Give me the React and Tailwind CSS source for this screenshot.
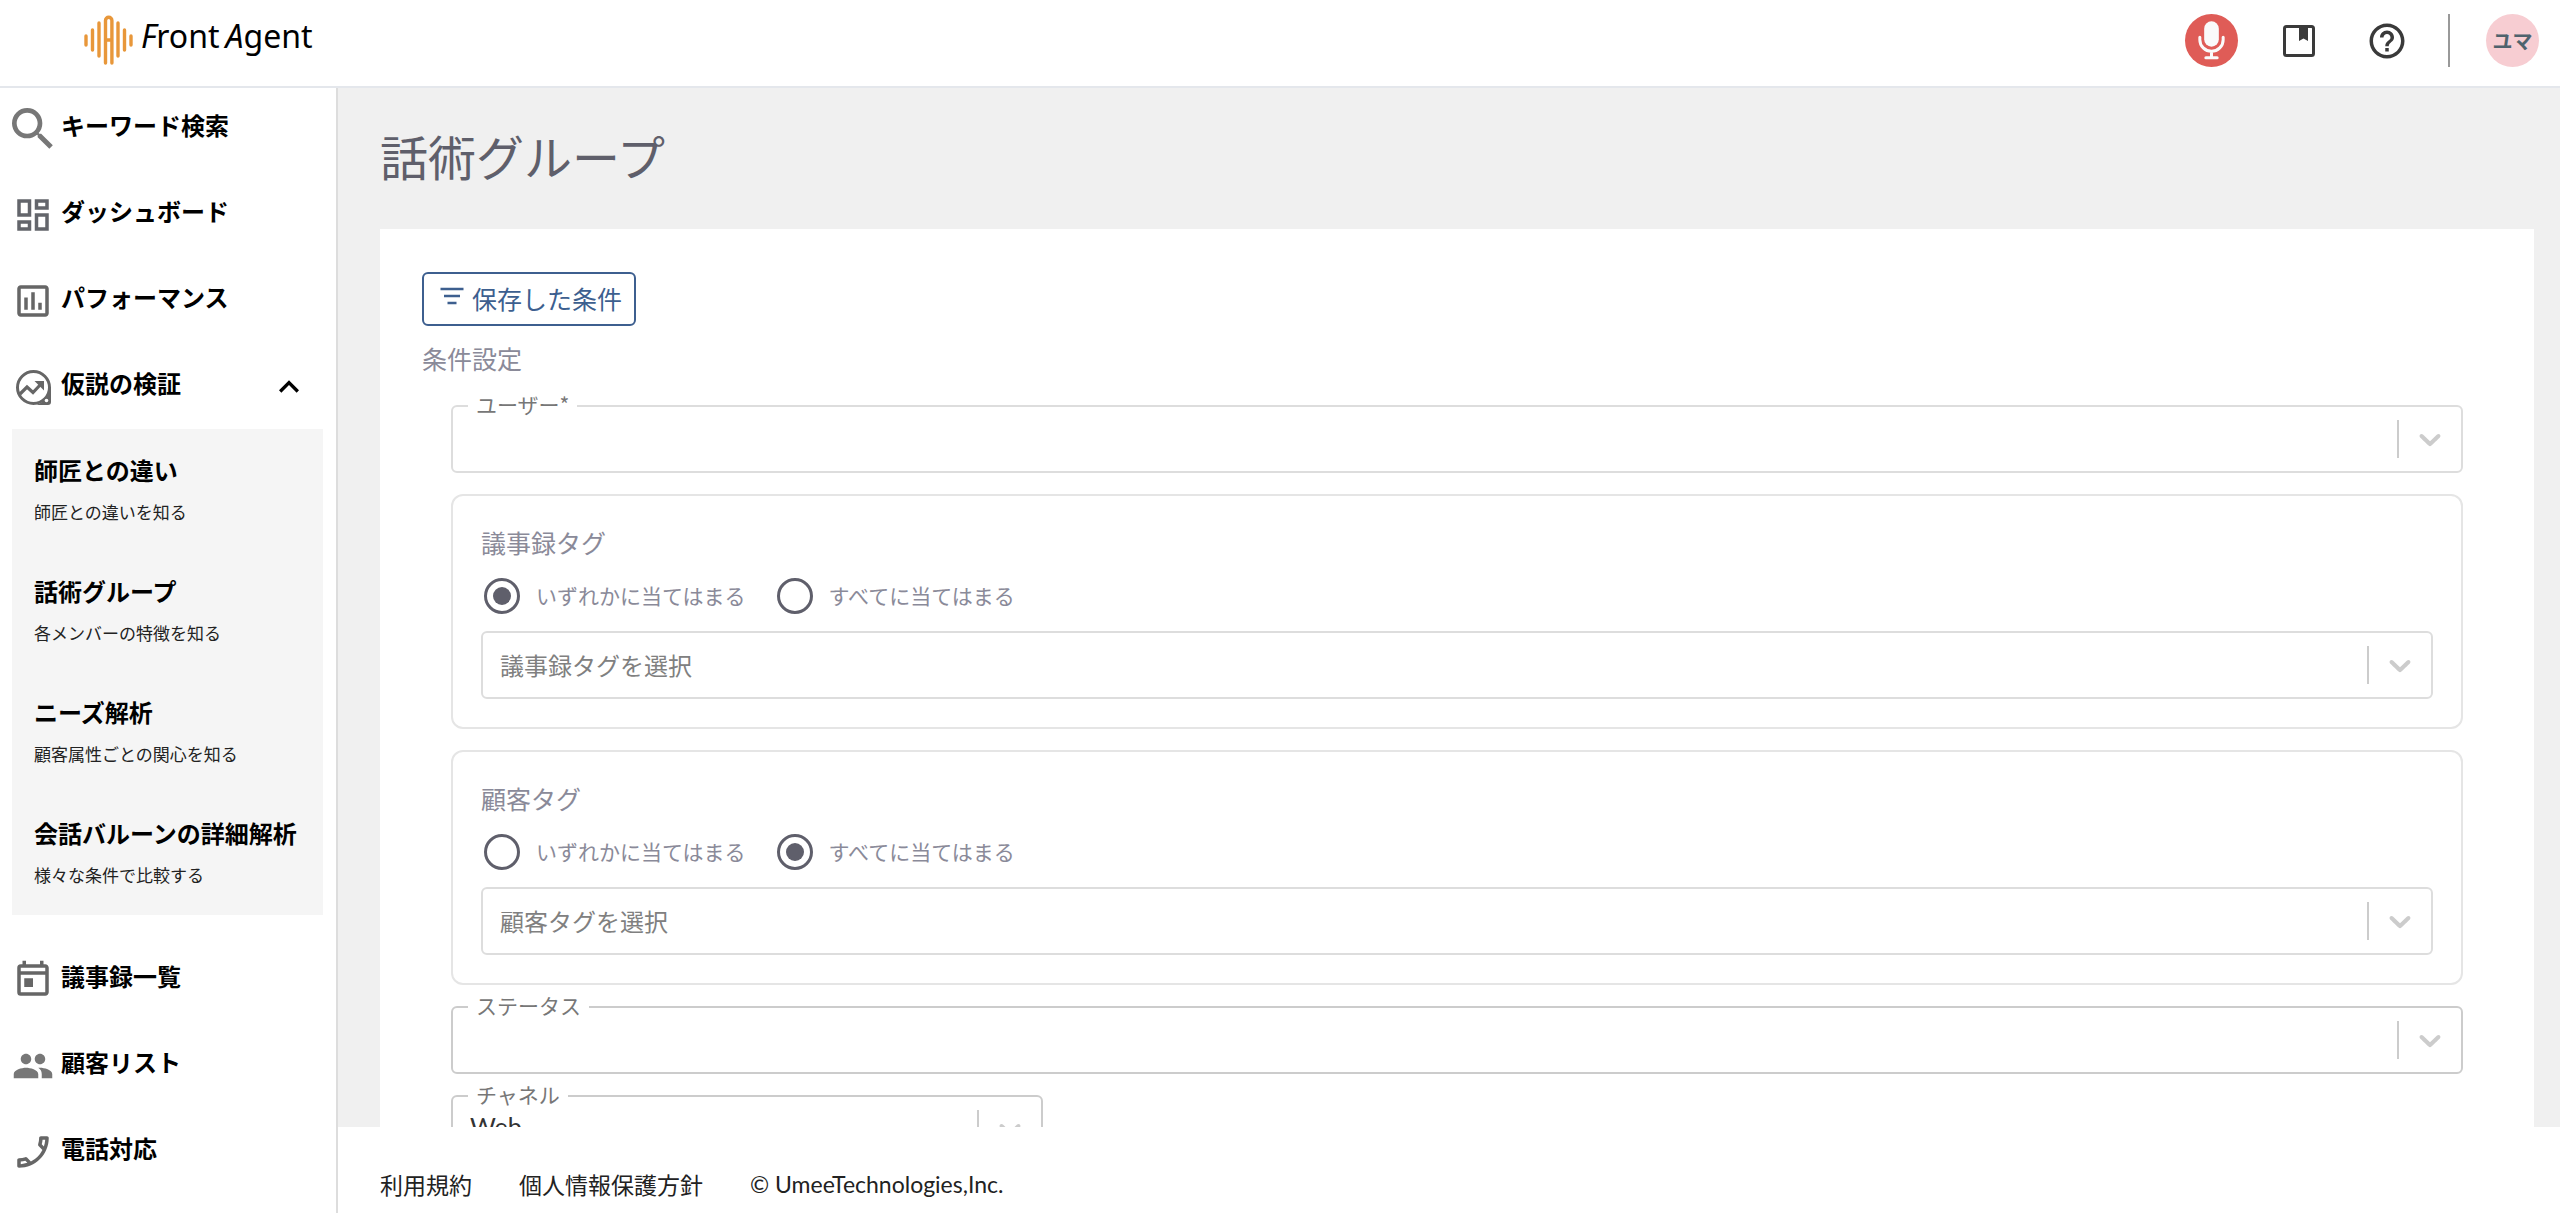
import React, { useState } from "react";
import {
    MdExpandLess,
    MdHelpOutline,
    MdOutlineAssessment,
    MdOutlineDashboard,
    MdOutlinePhone,
    MdOutlineToday,
    MdPeople,
    MdSearch,
} from "react-icons/md";

const LogoMark = () => (
    <svg viewBox="0 0 50 52" className="h-[52px] w-[50px]" fill="none" stroke="#e8973a" strokeWidth="3.4" strokeLinecap="round" aria-hidden="true">
        <path d="M3 22v9M9.500 16v20M16 9v33M35 9v33M41.500 16v20M48 22v9" />
        <path d="M22.500 49V6.500a3.200 3.200 0 0 1 6.400 0V49M22.500 26h6.400" />
    </svg>
);

const MicIcon = () => (
    <svg viewBox="0 0 80 117" className="h-[39px] w-[27px]" fill="none" stroke="#fafafa" strokeWidth="9" strokeLinecap="round" aria-hidden="true">
        <rect x="18" y="1" width="44" height="76" rx="22" fill="#fafafa" stroke="none" />
        <path d="M5 49v7a35 35 0 0 0 70 0v-7M40 92v17M23 110h34" />
    </svg>
);

const VerifyIcon = () => (
    <svg viewBox="0 0 35 35" className="h-[35px] w-[35px]" aria-hidden="true">
        <circle cx="17.500" cy="17.500" r="16" fill="none" stroke="#666" strokeWidth="3" />
        <path d="M35 17v15a3 3 0 0 1-3 3H18c8 0 15-8 15-18z" fill="#666" />
        <circle cx="30.500" cy="30.500" r="1.800" fill="#fff" />
        <path d="M4 24l7-7 6 5.500 8-8.500" fill="none" stroke="#666" strokeWidth="3.2" />
        <path d="M18.500 11H28v9.500z" fill="#666" />
    </svg>
);

const BookIcon = () => (
    <svg viewBox="0 0 32 32" className="h-8 w-8" aria-hidden="true">
        <rect x="1.500" y="1.500" width="29" height="29" rx="2" fill="none" stroke="#3a3a3a" strokeWidth="3" />
        <path d="M16 2h9v14l-4.500-2.500L16 16z" fill="#3a3a3a" />
    </svg>
);

const FilterIcon = () => (
    <svg viewBox="0 0 24 22" className="h-[22px] w-6" stroke="currentColor" strokeWidth="2.400" aria-hidden="true">
        <path d="M.5 2h23M4 9h16M7.500 16h9" />
    </svg>
);

const Chevron = () => (
    <svg viewBox="0 0 20 20" className="h-9 w-9" fill="#ccc" aria-hidden="true">
        <path d="M4.516 7.548c0.436-0.446 1.043-0.481 1.576 0l3.908 3.747 3.908-3.747c0.533-0.481 1.141-0.446 1.574 0 0.436 0.445 0.408 1.197 0 1.615-0.406 0.418-4.695 4.502-4.695 4.502-0.217 0.223-0.502 0.335-0.787 0.335s-0.570-0.112-0.789-0.335c0 0-4.287-4.084-4.695-4.502s-0.436-1.170 0-1.615z" />
    </svg>
);

const topMenu = [
    { label: "キーワード検索", icon: <MdSearch className="size-14 text-[#777]" /> },
    { label: "ダッシュボード", icon: <MdOutlineDashboard className="size-[42px] text-[#63656b]" /> },
    { label: "パフォーマンス", icon: <MdOutlineAssessment className="size-[42px] text-[#666]" /> },
];

const subMenu = [
    { label: "師匠との違い", note: "師匠との違いを知る" },
    { label: "話術グループ", note: "各メンバーの特徴を知る" },
    { label: "ニーズ解析", note: "顧客属性ごとの関心を知る" },
    { label: "会話バルーンの詳細解析", note: "様々な条件で比較する" },
];

const bottomMenu = [
    { label: "議事録一覧", icon: <MdOutlineToday className="size-[42px] text-[#666]" /> },
    { label: "顧客リスト", icon: <MdPeople className="size-[42px] text-[#777]" /> },
    { label: "電話対応", icon: <MdOutlinePhone className="size-[42px] -scale-x-100 text-[#666]" /> },
];

const MenuLink = ({ item }) => (
    <a href="#" className="flex h-[82px] items-center pl-[5px]">
        <span className="flex w-14 justify-center">{item.icon}</span>
        <span className="pb-2 text-[24px] leading-9 font-bold">{item.label}</span>
    </a>
);

const SelectBox = ({ id, label, placeholder, options = [], value = "", border = "border-[#ddd]" }) => (
    <div className={`relative flex h-[68px] items-center rounded-md border-2 bg-white ${border}`}>
        {label && (
            <label htmlFor={id} className="absolute -top-[17px] left-[15px] bg-white px-2 text-[21px] leading-7 text-[#777]">
                {label}
            </label>
        )}
        <select
            id={id}
            aria-label={label ? undefined : placeholder}
            defaultValue={value}
            className={`h-full flex-1 appearance-none bg-transparent pl-[17px] outline-none ${value ? "pb-1 font-['Lato','Noto_Sans_CJK_JP',sans-serif] text-[25px] text-[#333]" : "text-[24px] text-[#808080]"}`}
        >
            <option value="">{placeholder}</option>
            {options.map((option) => (
                <option key={option}>{option}</option>
            ))}
        </select>
        <span className="pointer-events-none flex items-center gap-[13px] pr-[13px]">
            <span className="h-[38px] w-0.5 bg-[#ccc]" />
            <Chevron />
        </span>
    </div>
);

const TagGroup = ({ name, title, placeholder, initial }) => {
    const [mode, setMode] = useState(initial);
    const modes = [
        { key: "any", label: "いずれかに当てはまる" },
        { key: "all", label: "すべてに当てはまる" },
    ];
    return (
        <section className="rounded-xl border-2 border-[#e5e5e5] p-7">
            <h3 className="text-[25px] leading-9 text-[#8a8a99]">{title}</h3>
            <div className="mt-[18px] mb-[17px] flex gap-[31px] pl-[3px]">
                {modes.map(({ key, label }) => (
                    <label key={key} className="flex h-9 items-center gap-4 text-[21px] leading-8 text-[#8a8a99]">
                        <input
                            type="radio"
                            name={name}
                            checked={mode === key}
                            onChange={() => setMode(key)}
                            className="grid size-9 appearance-none place-content-center rounded-full border-3 border-[#5f5f6b] before:size-[18px] before:rounded-full checked:before:bg-[#5f5f6b]"
                        />
                        <span className="pb-0.5">{label}</span>
                    </label>
                ))}
            </div>
            <SelectBox id={`${name}-select`} placeholder={placeholder} />
        </section>
    );
};

const Header = () => (
    <header className="flex h-[88px] shrink-0 items-start justify-between border-b-2 border-[#e4e7ec] bg-white pr-[21px] pl-[83px]">
        <a href="#" className="flex items-center gap-2 pt-[14px]">
            <LogoMark />
            <span className="flex gap-1.5 pb-2 font-['Noto_Sans',sans-serif] text-[32px] leading-10">
                <span><i>F</i>ront</span>
                <span><i>A</i>gent</span>
            </span>
        </a>
        <div className="flex items-center pt-[14px]">
            <button aria-label="録音" className="flex size-[53px] items-center justify-center rounded-full bg-[#df5c57]">
                <MicIcon />
            </button>
            <button aria-label="ガイド" className="ml-[45px]"><BookIcon /></button>
            <button aria-label="ヘルプ" className="ml-[51px]">
                <MdHelpOutline className="size-[42px] text-[#3a3a3a]" />
            </button>
            <span className="ml-10 h-[53px] w-0.5 bg-[#999]" />
            <button className="ml-9 size-[53px] rounded-full bg-[#f7cdd2] text-[20px] font-bold text-[#4f626d]">ユマ</button>
        </div>
    </header>
);

const Sidebar = () => {
    const [open, setOpen] = useState(true);
    return (
        <nav className="flex w-[338px] shrink-0 flex-col overflow-hidden border-r-2 border-[#ddd] bg-white text-black">
            <div className="flex flex-col gap-1">
                {topMenu.map((item) => (
                    <MenuLink key={item.label} item={item} />
                ))}
                <button onClick={() => setOpen(!open)} className="flex h-[82px] items-center pr-[27px] pl-[5px]">
                    <span className="flex w-14 justify-center"><VerifyIcon /></span>
                    <span className="flex-1 pb-2 text-left text-[24px] leading-9 font-bold">仮説の検証</span>
                    <MdExpandLess className={`size-10 ${open ? "" : "rotate-180"}`} />
                </button>
            </div>
            {open && (
                <ul className="mt-px mr-[13px] mb-6 ml-3 bg-[#f5f5f5] py-px">
                    {subMenu.map(({ label, note }) => (
                        <li key={label}>
                            <a href="#" className="flex h-[121px] flex-col justify-center gap-1.5 pl-[22px]">
                                <span className="text-[24px] leading-9 font-bold">{label}</span>
                                <span className="text-[17px] leading-9 text-[#222]">{note}</span>
                            </a>
                        </li>
                    ))}
                </ul>
            )}
            <div className="flex flex-col gap-1">
                {bottomMenu.map((item) => (
                    <MenuLink key={item.label} item={item} />
                ))}
            </div>
        </nav>
    );
};

const App = () => {
    return (
        <div className="flex h-screen flex-col font-['Noto_Sans_CJK_JP',sans-serif]">
            <Header />
            <div className="flex min-h-0 flex-1">
                <Sidebar />
                <div className="flex min-w-0 flex-1 flex-col">
                    <main className="min-h-0 flex-1 overflow-hidden bg-[#f0f0f0] pt-[31px] pr-[26px] pl-[42px]">
                        <h1 className="mb-[38px] text-[48px] leading-[72px] text-[#5f5f6b]">話術グループ</h1>
                        <div className="bg-white px-[42px] pt-[43px] pb-10">
                            <button className="flex h-[54px] items-center gap-2 rounded-md border-2 border-[#3d5f8f] pr-3 pb-0.5 pl-4 text-[25px] leading-9 text-[#3d5f8f]">
                                <FilterIcon />
                                保存した条件
                            </button>
                            <h2 className="mt-[14px] text-[25px] leading-9 text-[#8a8a99]">条件設定</h2>
                            <form className="mx-[29px] mt-[29px] flex flex-col gap-[21px]">
                                <SelectBox id="user" label="ユーザー*" />
                                <TagGroup name="minutes-tag" title="議事録タグ" placeholder="議事録タグを選択" initial="any" />
                                <TagGroup name="customer-tag" title="顧客タグ" placeholder="顧客タグを選択" initial="all" />
                                <SelectBox id="status" label="ステータス" border="border-[#ccc]" />
                                <div className="w-[592px]">
                                    <SelectBox id="channel" label="チャネル" options={["Web", "電話"]} value="Web" border="border-[#ccc]" />
                                </div>
                            </form>
                        </div>
                    </main>
                    <footer className="flex h-[86px] shrink-0 items-center gap-[47px] bg-white pt-7 pl-[42px] text-[23px] leading-9 text-[#222]">
                        <a href="#">利用規約</a>
                        <a href="#">個人情報保護方針</a>
                        <span className="font-['Lato',sans-serif]">© UmeeTechnologies,Inc.</span>
                    </footer>
                </div>
            </div>
        </div>
    );
};

export default App;
